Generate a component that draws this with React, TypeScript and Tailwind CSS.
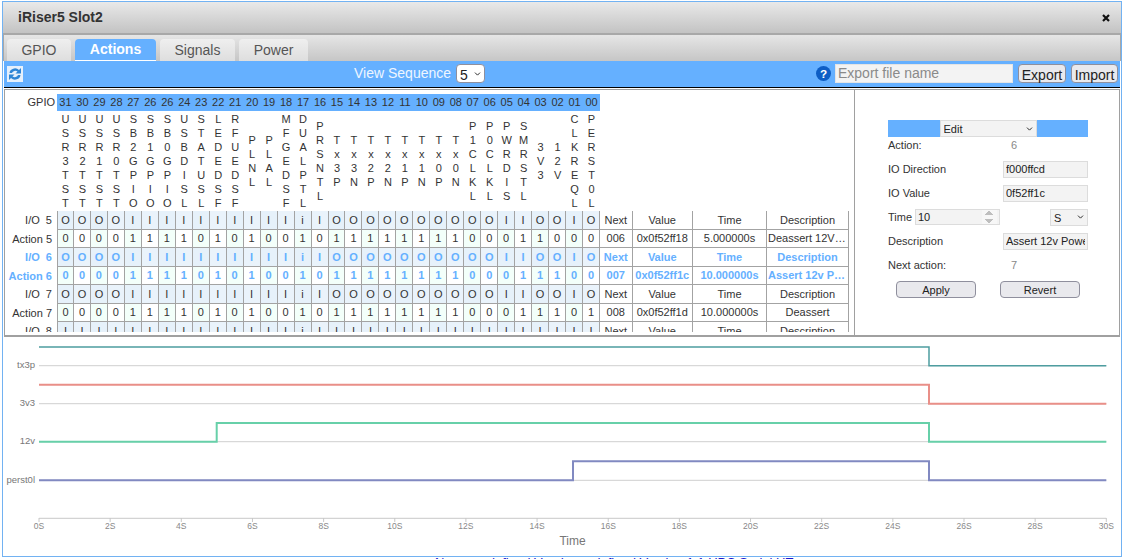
import { ChevronDown } from "lucide-react";

const gridCols = "grid grid-cols-[52px_repeat(32,16.97px)_32.5px_60.5px_74px_82px]";

const headerNums = "31 30 29 28 27 26 26 24 23 22 21 20 19 18 17 16 15 14 13 12 11 10 09 08 07 06 05 04 03 02 01 00".split(" ");

const signalNames = [
  "USR3TST", "USR2TST", "USR1TST", "USR0TST", "SB2GPIO", "SB1GPIO", "SB0GPIO", "USBDISL",
  "STATUSL", "LEDEDSF", "RFUEDSF", "PLNL", "PLAL", "MFGEDSF", "DUALPTL", "PRSNTL",
  "Tx3P", "Tx3N", "Tx2P", "Tx2N", "Tx1P", "Tx1N", "Tx0P", "Tx0N",
  "P1CLKL", "P0CLKL", "PWRDIS", "SMRSTL", "3V3", "12V", "CLKREQL", "PERST0L",
];

const dirs = "OOOOIIIIIIIIIIiIOOOOOOOOOOIIOOIO";
const dirs8 = "IIIIIIIIIIIIIIiIIIIIIIIIIIIIIIII";

const actions = [
  { n: 5, dirs, bits: 0x0f52ff18, next: "006", value: "0x0f52ff18", time: "5.000000s", desc: "Deassert 12V Power" },
  { n: 6, dirs, bits: 0x0f52ff1c, next: "007", value: "0x0f52ff1c", time: "10.000000s", desc: "Assert 12v Power", active: true },
  { n: 7, dirs, bits: 0x0f52ff1d, next: "008", value: "0x0f52ff1d", time: "10.000000s", desc: "Deassert" },
  { n: 8, dirs: dirs8, bits: 0x0f52ff1d, next: "009", value: "0x0f52ff1d", time: "15.000000s", desc: "Deassert" },
];

const Cell = ({ children, className = "" }: { children: React.ReactNode; className?: string }) => (
  <div className={`flex items-center justify-center overflow-hidden border-r border-b border-[#a3a3a3] ${className}`}>
    {children}
  </div>
);

const ActionRows = ({ a }: { a: (typeof actions)[number] }) => {
  const bits = (a.bits >>> 0).toString(2).padStart(32, "0");
  const tone = a.active ? "font-bold text-[#65b0ff]" : "";
  return (
    <>
      <div className={`${gridCols} h-[18.5px] ${tone}`}>
        <div className="flex items-center justify-end whitespace-pre pr-[5px]">{`I/O  ${a.n}`}</div>
        {a.dirs.split("").map((d, i) => (
          <Cell key={i} className={`${i === 0 ? "border-l" : ""} ${i % 2 === 0 ? "bg-[#e6f1fa]" : "bg-[#eaf3fb]"}`}>
            {d}
          </Cell>
        ))}
        <Cell>Next</Cell>
        <Cell>Value</Cell>
        <Cell>Time</Cell>
        <Cell>Description</Cell>
      </div>
      <div className={`${gridCols} h-[18.5px] ${tone}`}>
        <div className="flex items-center justify-end whitespace-pre pr-[5px]">{`Action ${a.n}`}</div>
        {bits.split("").map((b, i) => (
          <Cell key={i} className={`${i === 0 ? "border-l" : ""} ${i % 2 === 0 ? "bg-[#f3fffa]" : "bg-white"}`}>
            {b}
          </Cell>
        ))}
        <Cell>{a.next}</Cell>
        <Cell>{a.value}</Cell>
        <Cell>{a.time}</Cell>
        <Cell className="px-px">
          <span className="truncate">{a.desc}</span>
        </Cell>
      </div>
    </>
  );
};

const SequenceTable = () => (
  <div className="w-[849px] shrink-0 pt-1 text-[11px] text-[#333]">
    <div className={`${gridCols} h-[17px]`}>
      <div className="flex items-center justify-end pr-[2px]">GPIO</div>
      {headerNums.map((n, i) => (
        <div key={i} className="flex items-center justify-center bg-[#65b0ff]">
          {n}
        </div>
      ))}
    </div>
    <div className={`${gridCols} h-[100px]`}>
      <div />
      {signalNames.map(name => (
        <div key={name} className="flex flex-col items-center justify-center leading-[14px]">
          {name.split("").map((c, i) => (
            <span key={i}>{c}</span>
          ))}
        </div>
      ))}
    </div>
    <div className="h-[121px] overflow-hidden">
      {actions.map(a => (
        <ActionRows key={a.n} a={a} />
      ))}
    </div>
  </div>
);

const Dropdown = ({ value, className, textClass }: { value: string; className: string; textClass: string }) => (
  <div className={`relative ${className}`}>
    <select className={`h-full w-full appearance-none ${textClass}`}>
      <option>{value}</option>
    </select>
    <ChevronDown className="pointer-events-none absolute right-[3px] top-1/2 h-[9px] w-[9px] -translate-y-1/2 text-[#222]" strokeWidth={2.5} />
  </div>
);

const fieldClass = "h-[17px] w-[85px] border border-[#dcdcdc] bg-[#f3f3f3] px-[2px] text-[11px] text-[#222] outline-none";
const btnClass = "h-[17px] w-[80px] rounded-[4px] border border-[#8f8f9d] bg-[#e9e9ed] text-[11px] text-[#222]";
const panelSelect = "border border-[#dcdcdc] bg-[#f3f3f3] pl-[3px] text-[11px] text-[#222]";

const EditPanel = () => (
  <div className="flex-1 pl-[33px] pt-[30px] text-[11px] text-[#333]">
    <div className="w-[200px]">
      <div className="flex h-[17px] justify-center bg-[#65b0ff]">
        <Dropdown value="Edit" className="h-[17px] w-[97px]" textClass={panelSelect} />
      </div>
      <div className="flex h-4 items-center">
        <span className="w-[115px]">Action:</span>
        <span className="pl-2 text-[#888]">6</span>
      </div>
      <div className="mt-1">
        <div className="flex h-6 items-center justify-between">
          <span>IO Direction</span>
          <input className={fieldClass} defaultValue="f000ffcd" />
        </div>
        <div className="flex h-6 items-center justify-between">
          <span>IO Value</span>
          <input className={fieldClass} defaultValue="0f52ff1c" />
        </div>
        <div className="flex h-6 items-center">
          <span className="w-[27px]">Time</span>
          <input
            type="number"
            className="h-[16px] w-[85px] border border-[#dcdcdc] bg-[#f3f3f3] px-[2px] text-[11px] text-[#222] outline-none [&::-webkit-inner-spin-button]:opacity-50"
            defaultValue="10"
          />
          <Dropdown value="S" className="ml-auto h-[17px] w-[38px]" textClass={panelSelect} />
        </div>
        <div className="flex h-6 items-center justify-between">
          <span>Description</span>
          <input className={fieldClass} defaultValue="Assert 12v Power" />
        </div>
        <div className="flex h-6 items-center">
          <span className="w-[115px]">Next action:</span>
          <span className="pl-2 text-[#888]">7</span>
        </div>
      </div>
      <div className="mt-1 flex gap-6 pl-2">
        <button className={btnClass}>Apply</button>
        <button className={btnClass}>Revert</button>
      </div>
    </div>
  </div>
);

// page coordinates: the viewBox starts where the chart sits in the window
const X0 = 39;
const X_FALL = 929;
const X_END = 1106.3;

const traces = [
  { name: "tx3p", hi: 347, lo: 365.7, labelY: 368, color: "#4e9da0", width: 1.5, d: (hi: number, lo: number) => `M${X0} ${hi}H${X_FALL}V${lo}H${X_END}` },
  { name: "3v3", hi: 384.7, lo: 403.7, labelY: 405.5, color: "#e98f88", width: 2, d: (hi: number, lo: number) => `M${X0} ${hi}H${X_FALL}V${lo}H${X_END}` },
  { name: "12v", hi: 423, lo: 441.7, labelY: 444, color: "#67d0a9", width: 2, d: (hi: number, lo: number) => `M${X0} ${lo}H216.7V${hi}H${X_FALL}V${lo}H${X_END}` },
  { name: "perst0l", hi: 461.3, lo: 480.3, labelY: 483, color: "#8189c1", width: 2, d: (hi: number, lo: number) => `M${X0} ${lo}H573V${hi}H${X_FALL}V${lo}H${X_END}` },
];

const ticks = Array.from({ length: 16 }, (_, i) => i * 2);

const SignalChart = () => (
  <svg viewBox="3 337 1118 219" className="h-[219px] w-[1118px] shrink-0">
    {traces.map(t => (
      <line key={t.name} x1={X0} x2={X_END} y1={t.lo} y2={t.lo} stroke="#cfcfcf" strokeWidth="1" />
    ))}
    {traces.map(t => (
      <g key={t.name}>
        <path d={t.d(t.hi, t.lo)} fill="none" stroke={t.color} strokeWidth={t.width} />
        <text x="35" y={t.labelY} textAnchor="end" fontSize="9.5" fill="#777">
          {t.name}
        </text>
      </g>
    ))}
    <line x1={X0} x2={X_END} y1="518.3" y2="518.3" stroke="#c8c8c8" strokeWidth="1" />
    {ticks.map(s => {
      const x = X0 + (s / 30) * (X_END - X0);
      return (
        <g key={s}>
          <line x1={x} x2={x} y1="518" y2="522" stroke="#c8c8c8" strokeWidth="1" />
          <text x={x} y="528.5" textAnchor="middle" fontSize="8.5" fill="#888">
            {s}S
          </text>
        </g>
      );
    })}
    <text x="572.5" y="545" textAnchor="middle" fontSize="12" fill="#777">
      Time
    </text>
  </svg>
);

const App = () => {
  return (
    <div className="relative h-[559px] w-[1124px] overflow-hidden bg-white [font-family:'Liberation_Sans',Arial,sans-serif]">
      <p className="whitespace-nowrap pl-[435px] pt-[555px] text-[13px] leading-4 text-[#1a1ad0]">
        Name undefined Vendor undefined Version 1.1 UPC Serial UT
      </p>

      {/* dialog sits over the page */}
      <div className="absolute left-[2px] top-px flex h-[556px] w-[1120px] flex-col border border-[#72b2f2] bg-white">
        <div className="flex h-[33px] shrink-0 items-center justify-between border-b-2 border-[#a8a8a8] bg-gradient-to-b from-[#e9e9e9] to-[#c3c3c3] pl-[15px] pr-[11px]">
          <span className="text-[14px] font-bold text-[#333]">iRiser5 Slot2</span>
          <svg viewBox="0 0 8 8" className="h-2 w-2">
            <path d="M1 1L7 7M7 1L1 7" stroke="#111" strokeWidth="2.2" />
          </svg>
        </div>

        <div className="flex h-[26px] shrink-0 items-end gap-1 border-l border-r border-[#a8a8a8] bg-gradient-to-b from-[#e6e6e6] to-[#c6c6c6] pl-[3px] text-[14px] text-[#555]">
          <div className="flex h-[22px] w-[64px] items-center justify-center rounded-t-[4px] bg-gradient-to-b from-[#efefef] to-[#dedede]">GPIO</div>
          <div className="flex h-[22px] w-[81px] items-center justify-center rounded-t-[4px] border-b border-white bg-[#65b0ff] font-bold text-white">Actions</div>
          <div className="flex h-[22px] w-[75px] items-center justify-center rounded-t-[4px] bg-gradient-to-b from-[#efefef] to-[#dedede]">Signals</div>
          <div className="flex h-[22px] w-[69px] items-center justify-center rounded-t-[4px] bg-gradient-to-b from-[#efefef] to-[#dedede]">Power</div>
        </div>

        <div className="mx-px flex h-[27px] shrink-0 items-center border-b border-black bg-[#65b0ff] pb-px pl-[3px] pr-[2px] text-[14px]">
          <svg viewBox="0 0 16 16" className="h-4 w-4 shrink-0">
            <rect width="16" height="16" fill="#e6f0fb" />
            <path d="M2.5 7A5.5 5 0 0 1 12 4L14 2V7.5H8.5L10.5 5.5A3.5 3 0 0 0 5 7Z" fill="#2f86d6" />
            <path d="M13.5 9A5.5 5 0 0 1 4 12L2 14V8.5H7.5L5.5 10.5A3.5 3 0 0 0 11 9Z" fill="#2f86d6" />
          </svg>
          <span className="ml-[331px] text-[#eef6ff]">View Sequence</span>
          <Dropdown
            value="5"
            className="ml-[5px] h-[19px] w-[29px]"
            textClass="rounded-[4px] border border-[#8f8f9d] bg-white pl-[3px] text-[14px] text-[#222]"
          />
          <div className="ml-auto flex items-center">
            <svg viewBox="0 0 16 16" className="h-[15px] w-[15px]">
              <circle cx="8" cy="8" r="8" fill="#0d5dc5" />
              <text x="8" y="12.5" textAnchor="middle" fontSize="12.5" fontWeight="bold" fill="#fff">?</text>
            </svg>
            <input
              className="ml-1 h-[19px] w-[178px] border border-[#e4e4e4] bg-[#f3f3f3] px-[2px] text-[14px] text-[#222] outline-none placeholder:text-[#8a8a8a]"
              placeholder="Export file name"
            />
            <button className="ml-[5px] h-[19px] w-[48px] rounded-[4px] border border-[#8f8f9d] bg-[#e9e9ed] text-[14px] text-[#222]">Export</button>
            <button className="ml-[5px] h-[19px] w-[47px] rounded-[4px] border border-[#8f8f9d] bg-[#e9e9ed] text-[14px] text-[#222]">Import</button>
          </div>
        </div>

        <div className="mx-px mt-px flex h-[248px] shrink-0 border-x border-t border-b-2 border-[#a0a0a0]">
          <SequenceTable />
          <div className="w-px shrink-0 bg-[#a0a0a0]" />
          <EditPanel />
        </div>

        <SignalChart />
      </div>
    </div>
  );
};

export default App;
